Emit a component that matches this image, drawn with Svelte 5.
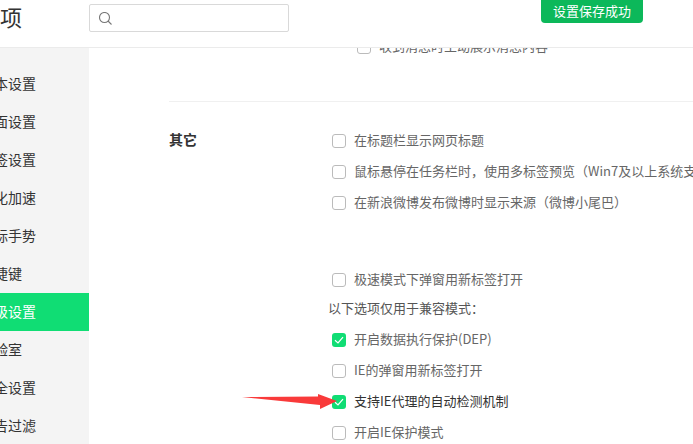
<script>
  const navItems = ['基本设置', '界面设置', '标签设置', '优化加速', '鼠标手势', '快捷键', '高级设置', '实验室', '安全设置', '广告过滤'];
  const activeNav = '高级设置';

  const otherOptions = [
    { label: '在标题栏显示网页标题' },
    { label: '鼠标悬停在任务栏时，使用多标签预览（Win7及以上系统支持）' },
    { label: '在新浪微博发布微博时显示来源（微博小尾巴）' }
  ];
  const compatOptions = [
    { label: '开启数据执行保护(DEP)', checked: true },
    { label: 'IE的弹窗用新标签打开' },
    { label: '支持IE代理的自动检测机制', checked: true, dark: true },
    { label: '开启IE保护模式' }
  ];
</script>

{#snippet option(item)}
  <div class="row" class:dark={item.dark}>
    <span class="box" class:on={item.checked}>
      {#if item.checked}
        <svg width="14" height="14" viewBox="0 0 14 14"><path d="M3 7.2 6 10 11 4.2" fill="none" stroke="#fff" stroke-width="1.2" /></svg>
      {/if}
    </span>
    <span class="text">{item.label}</span>
  </div>
{/snippet}

<div class="page">
  <header>
    <h1>选项</h1>
    <div class="search">
      <svg width="14" height="14" viewBox="0 0 14 14"><circle cx="5.5" cy="5.5" r="5" fill="none" stroke="#777" stroke-width="1.1" /><path d="M9 9 12.5 12.5" stroke="#777" stroke-width="1.1" /></svg>
    </div>
  </header>

  <div class="body">
    <nav>
      {#each navItems as item}
        <div class="nav-item" class:active={item === activeNav}><span>{item}</span></div>
      {/each}
    </nav>

    <main>
      <div class="clipped-row">
        <div class="row">
          <span class="box"></span>
          <span class="text">收到消息时主动展示消息内容</span>
        </div>
      </div>

      <section>
        <h2>其它</h2>
        <div class="options">
          {#each otherOptions as item}
            {@render option(item)}
          {/each}
          <div class="spaced">
            {@render option({ label: '极速模式下弹窗用新标签打开' })}
          </div>
          <div class="note">以下选项仅用于兼容模式：</div>
          {#each compatOptions as item}
            {@render option(item)}
          {/each}
        </div>
      </section>
    </main>
  </div>

  <div class="toast">设置保存成功</div>

  <svg class="arrow" width="100" height="20" viewBox="0 0 100 20"><polygon points="0,5 76,4.5 76,2 95,9 78,17 78,13" fill="#f93a3a" /></svg>
</div>

<style>
  :global(body) {
    margin: 0;
    background: #fff;
  }
  .page {
    position: relative;
    width: 693px;
    height: 444px;
    overflow: hidden;
    font-family: "Noto Sans CJK SC", "Noto Sans", sans-serif;
    color: #333;
  }
  header {
    position: relative;
    z-index: 1;
    height: 47px;
    display: flex;
    align-items: flex-start;
    background: #fff;
    border-bottom: 1px solid #ebebeb;
  }
  h1 {
    margin: 1px 0 0 -22px;
    width: 111px;
    flex: none;
    font-size: 22px;
    line-height: 30px;
    font-weight: 400;
    color: #333;
  }
  .search {
    box-sizing: border-box;
    margin-top: 4px;
    width: 200px;
    height: 28px;
    padding: 7px 0 0 9px;
    border: 1px solid #d9d9d9;
    border-radius: 2px;
  }
  .search svg {
    display: block;
  }
  .body {
    display: flex;
    height: 396px;
  }
  nav {
    flex: none;
    width: 89px;
    padding-top: 17px;
    background: #f4f4f4;
    overflow: hidden;
  }
  .nav-item {
    height: 38px;
    line-height: 36px;
    font-size: 14px;
    color: #333;
  }
  .nav-item span {
    display: block;
    margin-left: -20px;
    white-space: nowrap;
  }
  .nav-item.active {
    background: #10dd74;
    color: #fff;
  }
  main {
    flex: 1;
    min-width: 0;
    overflow: hidden;
    padding-left: 80px;
  }
  .clipped-row {
    margin: -17px 0 0 188px;
    height: 70px;
  }
  section {
    display: flex;
    padding-top: 23px;
    border-top: 1px solid #f0f0f0;
  }
  h2 {
    flex: none;
    width: 163px;
    margin: -1px 0 0;
    font-size: 14px;
    line-height: 31px;
    font-weight: 700;
    color: #333;
  }
  .options {
    flex: none;
    width: 500px;
  }
  .row {
    display: flex;
    align-items: center;
    height: 31px;
    font-size: 13px;
    color: #666;
    white-space: nowrap;
  }
  .row.dark {
    color: #333;
  }
  .text {
    margin-top: -3px;
  }
  .box {
    box-sizing: border-box;
    flex: none;
    width: 14px;
    height: 14px;
    margin-right: 8px;
    border: 1px solid #bbb;
    border-radius: 3px;
    background: #fff;
  }
  .box.on {
    border: 0;
    background: #10dd74;
  }
  .box svg {
    display: block;
  }
  .spaced {
    margin-top: 46px;
  }
  .note {
    height: 29px;
    line-height: 25px;
    margin-left: -4px;
    font-size: 13px;
    color: #555;
  }
  .toast {
    position: absolute;
    z-index: 2;
    top: 0;
    left: 541px;
    padding: 0 12px;
    height: 23px;
    line-height: 22px;
    font-size: 13px;
    color: #fff;
    background: #0cb85a;
    border-radius: 0 0 4px 4px;
  }
  .arrow {
    position: absolute;
    z-index: 2;
    left: 242px;
    top: 392px;
  }
</style>
